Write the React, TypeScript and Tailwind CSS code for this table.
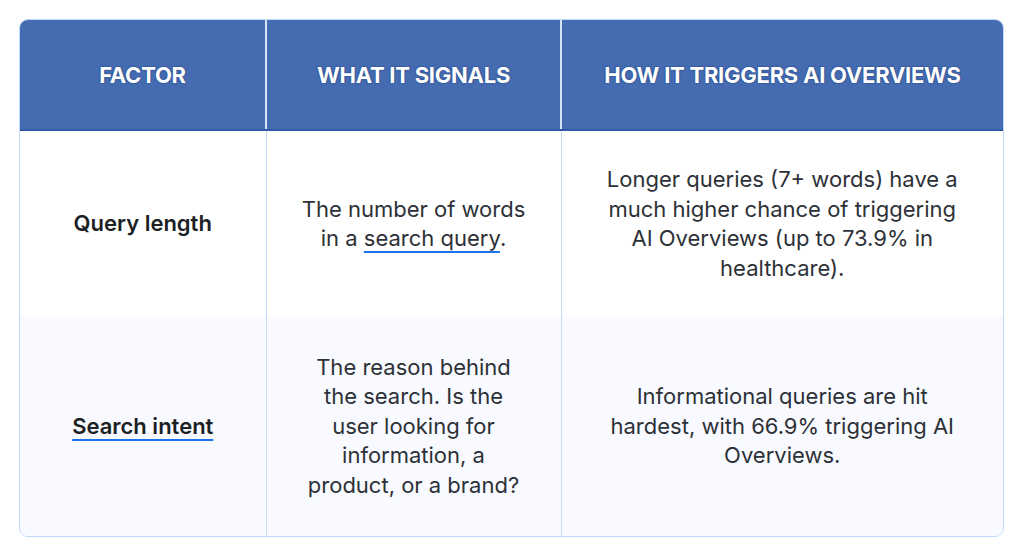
const rows = [
  {
    factor: <span>Query length</span>,
    signal: (
      <>
        The number of words
        <br />
        in a <Link>search query</Link>.
      </>
    ),
    trigger: (
      <>
        Longer queries (7+ words) have a
        <br />
        much higher chance of triggering
        <br />
        AI Overviews (up to 73.9% in
        <br />
        healthcare).
      </>
    ),
    height: "h-[187px]",
    bg: "bg-white",
  },
  {
    factor: <Link>Search intent</Link>,
    signal: (
      <>
        The reason behind
        <br />
        the search. Is the
        <br />
        user looking for
        <br />
        information, a
        <br />
        product, or a brand?
      </>
    ),
    trigger: (
      <>
        Informational queries are hit
        <br />
        hardest, with 66.9% triggering AI
        <br />
        Overviews.
      </>
    ),
    height: "h-[219px]",
    bg: "bg-[#f8faff]",
  },
];

function Link({ children }: { children: React.ReactNode }) {
  return (
    <span className="underline decoration-[#1a73e8] decoration-2 underline-offset-[5px]">
      {children}
    </span>
  );
}

export default function App() {
  return (
    <div className="min-h-[557px] bg-white pl-[19px] pr-[20px] pt-[19px] font-['Inter',sans-serif]">
      <div className="overflow-hidden rounded-[9px] border border-[#bcd8fb]">
        <table className="w-full table-fixed border-collapse text-center">
          <colgroup>
            <col className="w-[246px]" />
            <col className="w-[295px]" />
            <col />
          </colgroup>
          <thead>
            <tr className="h-[110px] bg-[#456bb0] text-[22px] font-bold tracking-[-0.25px] text-white [text-shadow:0_0_2px_#1a3c7c]">
              <th className="border-b-2 border-b-[#2f5aa6] pt-[2px]">FACTOR</th>
              <th className="border-b-2 border-l-2 border-b-[#2f5aa6] border-l-[#d5e4f8] pt-[2px]">WHAT IT SIGNALS</th>
              <th className="border-b-2 border-l-2 border-b-[#2f5aa6] border-l-[#d5e4f8] pt-[2px]">HOW IT TRIGGERS AI OVERVIEWS</th>
            </tr>
          </thead>
          <tbody>
            {rows.map((r, i) => (
              <tr key={i} className={`${r.height} ${r.bg} text-[22px] leading-[29.5px] text-[#2d3137]`}>
                <td className="font-semibold text-[#1c1f24]">{r.factor}</td>
                <td className="border-l border-[#c3dcfa]">{r.signal}</td>
                <td className="border-l border-[#c3dcfa]">{r.trigger}</td>
              </tr>
            ))}
          </tbody>
        </table>
      </div>
    </div>
  );
}
